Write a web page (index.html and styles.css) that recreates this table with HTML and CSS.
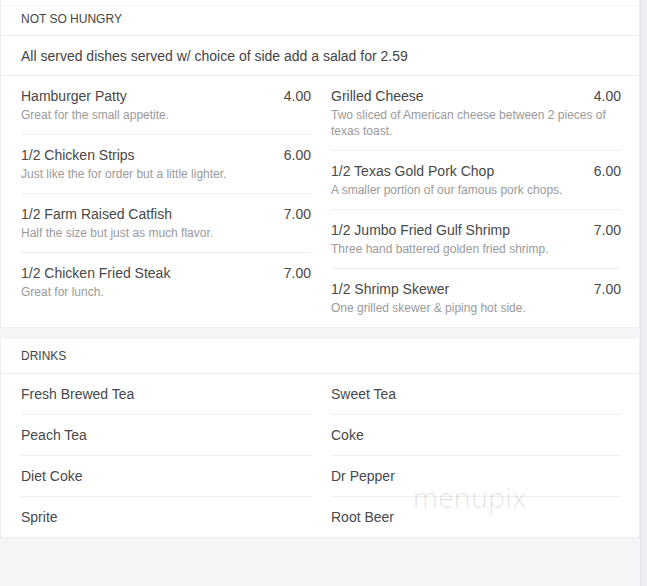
FILE: index.html
```html
<!DOCTYPE html>
<html>
<head>
<meta charset="utf-8">
<link rel="stylesheet" href="styles.css">
</head>
<body>
<main class="page">
  <section class="card card-first">
    <div class="card-head">NOT SO HUNGRY</div>
    <div class="card-note">All served dishes served w/ choice of side add a salad for 2.59</div>
    <div class="cols">
      <ul class="col">
        <li class="item"><div class="row"><span>Hamburger Patty</span><span>4.00</span></div><p class="desc">Great for the small appetite.</p></li>
        <li class="item"><div class="row"><span>1/2 Chicken Strips</span><span>6.00</span></div><p class="desc">Just like the for order but a little lighter.</p></li>
        <li class="item"><div class="row"><span>1/2 Farm Raised Catfish</span><span>7.00</span></div><p class="desc">Half the size but just as much flavor.</p></li>
        <li class="item"><div class="row"><span>1/2 Chicken Fried Steak</span><span>7.00</span></div><p class="desc">Great for lunch.</p></li>
      </ul>
      <ul class="col">
        <li class="item"><div class="row"><span>Grilled Cheese</span><span>4.00</span></div><p class="desc">Two sliced of American cheese between 2 pieces of texas toast.</p></li>
        <li class="item"><div class="row"><span>1/2 Texas Gold Pork Chop</span><span>6.00</span></div><p class="desc">A smaller portion of our famous pork chops.</p></li>
        <li class="item"><div class="row"><span>1/2 Jumbo Fried Gulf Shrimp</span><span>7.00</span></div><p class="desc">Three hand battered golden fried shrimp.</p></li>
        <li class="item"><div class="row"><span>1/2 Shrimp Skewer</span><span>7.00</span></div><p class="desc">One grilled skewer &amp; piping hot side.</p></li>
      </ul>
    </div>
  </section>
  <section class="card card-drinks">
    <div class="card-head">DRINKS</div>
    <div class="cols">
      <ul class="col">
        <li class="item"><div class="row"><span>Fresh Brewed Tea</span></div></li>
        <li class="item"><div class="row"><span>Peach Tea</span></div></li>
        <li class="item"><div class="row"><span>Diet Coke</span></div></li>
        <li class="item"><div class="row"><span>Sprite</span></div></li>
      </ul>
      <ul class="col">
        <li class="item"><div class="row"><span>Sweet Tea</span></div></li>
        <li class="item"><div class="row"><span>Coke</span></div></li>
        <li class="item"><div class="row"><span>Dr Pepper</span></div></li>
        <li class="item"><div class="row"><span>Root Beer</span></div></li>
      </ul>
    </div>
    <div class="watermark">menupix</div>
  </section>
</main>
</body>
</html>
```
FILE: styles.css
```css
html, body {
  margin: 0;
  padding: 0;
}
body {
  background: #ededf3;
  font-family: "Liberation Sans", Arial, sans-serif;
  color: #444;
  width: 647px;
  height: 586px;
  overflow: hidden;
}
.page {
  width: 641px;
  min-height: 586px;
  background: #f5f5f8;
  border-right: 1px solid #e4e4ec;
  box-sizing: border-box;
}
.card {
  background: #fff;
  border-left: 1px solid #eeeeee;
  border-right: 1px solid #eeeeee;
  border-bottom: 1px solid #f0f0f0;
  position: relative;
}
.card-first {
  padding-top: 5px;
}
.card-first .card-head {
  border-top: 1px solid #f4f4f4;
  height: 29px;
  line-height: 27px;
}
.card-drinks {
  margin-top: 11px;
}
.card-head {
  height: 34px;
  line-height: 35px;
  padding-left: 20px;
  font-size: 12px;
  color: #444;
  border-bottom: 1px solid #efefef;
}
.card-note {
  height: 39px;
  line-height: 40px;
  padding-left: 20px;
  font-size: 14px;
  color: #444;
  border-bottom: 1px solid #efefef;
}
.cols {
  display: grid;
  grid-template-columns: 290px 290px;
  column-gap: 20px;
  padding: 0 19px 0 20px;
}
.col {
  list-style: none;
  margin: 0;
  padding: 0;
}
.item {
  padding: 11px 0;
  border-bottom: 1px solid #eeeeee;
}
.item:last-child {
  border-bottom: none;
}
.row {
  display: flex;
  justify-content: space-between;
  font-size: 14px;
  line-height: 18px;
  color: #484848;
}
.desc {
  margin: 2px 0 0;
  font-size: 12px;
  line-height: 16px;
  color: #9a9a9a;
}
.watermark {
  position: absolute;
  left: 412px;
  top: 139px;
  font-family: "Open Sans", sans-serif;
  font-weight: 300;
  font-size: 28px;
  letter-spacing: 0.5px;
  color: rgba(0, 0, 0, 0.12);
  pointer-events: none;
}
```
